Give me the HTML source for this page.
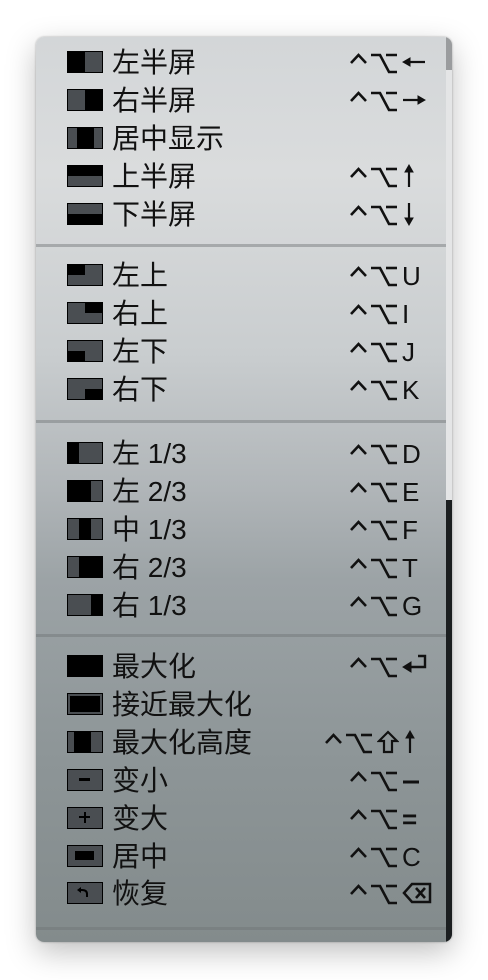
<!DOCTYPE html>
<html><head><meta charset="utf-8"><style>
*{margin:0;padding:0;box-sizing:border-box}
body{width:488px;height:980px;background:#fff;position:relative;overflow:hidden;font-family:"Liberation Sans","Noto Sans CJK SC",sans-serif}
.menu{position:absolute;left:36px;top:37px;width:416px;height:905px;border-radius:8px;overflow:hidden;
background:linear-gradient(180deg,#d3d6d8 0%,#dadcdd 15%,#c9cdcf 35%,#b0b5b8 50%,#9ca3a6 60%,#8d9597 80%,#838b8c 100%);
box-shadow:0 10px 30px rgba(0,0,0,.25),0 0 2px rgba(0,0,0,.3)}
.strip{position:absolute;right:0;top:463px;width:6px;bottom:0;background:#1b1e20}
.thumb{position:absolute;right:0;top:0;width:6px;height:33px;background:#9a9c9e}
.track{position:absolute;right:0;top:33px;width:6px;height:430px;background:#e4e5e6}
.sep{position:absolute;left:0;right:6px;height:3px;background:rgba(110,115,118,.45)}
.row{position:absolute;left:0;right:6px;height:30px}
.ic{position:absolute;left:31px;top:4px;width:36px;height:22px;border:1.5px solid #000;background:#4a4e52}
.ic i{position:absolute;background:#000}
.t{position:absolute;left:76px;top:1px;font-size:28px;color:#111;line-height:30px;white-space:nowrap}
.k{position:absolute;left:314px;top:0;height:30px;display:flex;align-items:center;gap:4px}
.k svg{display:block;stroke:#111;fill:none;stroke-width:2.6}
.k span{font-size:26px;line-height:30px;color:#111;margin-top:2px}
</style></head><body>
<svg width="0" height="0" style="position:absolute">
<defs>
<g id="co"><polyline points="1,16 8.5,8 16,16"/><polyline points="21,8 30,8 39,25 47,25"/><line x1="36" y1="8" x2="47" y2="8"/></g>
</defs></svg>
<div class="menu">
<div class="thumb"></div><div class="track"></div><div class="strip"></div>

<div class="row" style="top:10px"><div class="ic"><i style="left:0;top:0;width:50%;height:100%"></i></div><div class="t">左半屏</div><div class="k"><svg width="48" height="30"><use href="#co"/></svg><svg width="24" height="30"><line x1="6" y1="15" x2="23" y2="15" stroke-width="2.2"/><polygon points="1,15 8,11 8,19" fill="#111" stroke-width="1"/></svg></div></div>
<div class="row" style="top:48px"><div class="ic"><i style="right:0;top:0;width:50%;height:100%"></i></div><div class="t">右半屏</div><div class="k"><svg width="48" height="30"><use href="#co"/></svg><svg width="24" height="30"><line x1="1" y1="15" x2="18" y2="15" stroke-width="2.2"/><polygon points="23,15 16,11 16,19" fill="#111" stroke-width="1"/></svg></div></div>
<div class="row" style="top:86px"><div class="ic"><i style="left:25%;top:0;width:50%;height:100%"></i></div><div class="t">居中显示</div></div>
<div class="row" style="top:124px"><div class="ic"><i style="left:0;top:0;width:100%;height:50%"></i></div><div class="t">上半屏</div><div class="k"><svg width="48" height="30"><use href="#co"/></svg><svg width="14" height="30"><line x1="7" y1="10" x2="7" y2="26" stroke-width="2.2"/><polygon points="7,4 3,11 11,11" fill="#111" stroke-width="1"/></svg></div></div>
<div class="row" style="top:162px"><div class="ic"><i style="left:0;bottom:0;width:100%;height:50%"></i></div><div class="t">下半屏</div><div class="k"><svg width="48" height="30"><use href="#co"/></svg><svg width="14" height="30"><line x1="7" y1="4" x2="7" y2="20" stroke-width="2.2"/><polygon points="7,26 3,19 11,19" fill="#111" stroke-width="1"/></svg></div></div>
<div class="sep" style="top:207px"></div>

<div class="row" style="top:223px"><div class="ic"><i style="left:0;top:0;width:50%;height:50%"></i></div><div class="t">左上</div><div class="k"><svg width="48" height="30"><use href="#co"/></svg><span>U</span></div></div>
<div class="row" style="top:261px"><div class="ic"><i style="right:0;top:0;width:50%;height:50%"></i></div><div class="t">右上</div><div class="k"><svg width="48" height="30"><use href="#co"/></svg><span>I</span></div></div>
<div class="row" style="top:299px"><div class="ic"><i style="left:0;bottom:0;width:50%;height:50%"></i></div><div class="t">左下</div><div class="k"><svg width="48" height="30"><use href="#co"/></svg><span>J</span></div></div>
<div class="row" style="top:337px"><div class="ic"><i style="right:0;bottom:0;width:50%;height:50%"></i></div><div class="t">右下</div><div class="k"><svg width="48" height="30"><use href="#co"/></svg><span>K</span></div></div>
<div class="sep" style="top:383px"></div>

<div class="row" style="top:401px"><div class="ic"><i style="left:0;top:0;width:33%;height:100%"></i></div><div class="t">左 1/3</div><div class="k"><svg width="48" height="30"><use href="#co"/></svg><span>D</span></div></div>
<div class="row" style="top:439px"><div class="ic"><i style="left:0;top:0;width:67%;height:100%"></i></div><div class="t">左 2/3</div><div class="k"><svg width="48" height="30"><use href="#co"/></svg><span>E</span></div></div>
<div class="row" style="top:477px"><div class="ic"><i style="left:33%;top:0;width:34%;height:100%"></i></div><div class="t">中 1/3</div><div class="k"><svg width="48" height="30"><use href="#co"/></svg><span>F</span></div></div>
<div class="row" style="top:515px"><div class="ic"><i style="right:0;top:0;width:67%;height:100%"></i></div><div class="t">右 2/3</div><div class="k"><svg width="48" height="30"><use href="#co"/></svg><span>T</span></div></div>
<div class="row" style="top:553px"><div class="ic"><i style="right:0;top:0;width:33%;height:100%"></i></div><div class="t">右 1/3</div><div class="k"><svg width="48" height="30"><use href="#co"/></svg><span>G</span></div></div>
<div class="sep" style="top:597px"></div>

<div class="row" style="top:614px"><div class="ic" style="background:#000"></div><div class="t">最大化</div><div class="k"><svg width="48" height="30"><use href="#co"/></svg><svg width="26" height="30"><polyline points="16,5 23,5 23,16 8,16" stroke-width="2.4"/><polygon points="1,16 9,11 9,21" fill="#111" stroke-width="1"/></svg></div></div>
<div class="row" style="top:652px"><div class="ic"><i style="left:2px;top:2px;right:2px;bottom:2px"></i></div><div class="t">接近最大化</div></div>
<div class="row" style="top:690px"><div class="ic"><i style="left:17%;top:0;width:50%;height:100%"></i></div><div class="t">最大化高度</div><div class="k" style="left:289px"><svg width="48" height="30"><use href="#co"/></svg><svg width="22" height="30"><polygon points="11,5 20,14 15,14 15,25 7,25 7,14 2,14" stroke-width="2.2"/></svg><svg width="14" height="30"><line x1="7" y1="10" x2="7" y2="26" stroke-width="2.2"/><polygon points="7,4 3,11 11,11" fill="#111" stroke-width="1"/></svg></div></div>
<div class="row" style="top:728px"><div class="ic"><i style="left:11px;top:8px;width:11px;height:3px"></i></div><div class="t">变小</div><div class="k"><svg width="48" height="30"><use href="#co"/></svg><svg width="18" height="30"><line x1="1" y1="17" x2="17" y2="17" stroke-width="3"/></svg></div></div>
<div class="row" style="top:766px"><div class="ic"><i style="left:11px;top:8px;width:11px;height:2px"></i><i style="left:15.5px;top:4px;width:2px;height:11px"></i></div><div class="t">变大</div><div class="k"><svg width="48" height="30"><use href="#co"/></svg><span style="font-weight:bold">=</span></div></div>
<div class="row" style="top:804px"><div class="ic"><i style="left:7px;top:5px;width:19px;height:9px"></i></div><div class="t">居中</div><div class="k"><svg width="48" height="30"><use href="#co"/></svg><span>C</span></div></div>
<div class="row" style="top:841px"><div class="ic"><svg width="33" height="19" style="position:absolute;left:0;top:0"><path d="M19,14 V11 Q19,7 14,7 H12" stroke="#000" stroke-width="2" fill="none"/><polygon points="9,7 13,4 13,10" fill="#000"/></svg></div><div class="t">恢复</div><div class="k"><svg width="48" height="30"><use href="#co"/></svg><svg width="30" height="30"><polygon points="2,15 10,6 28,6 28,24 10,24" stroke-width="2.5"/><line x1="14" y1="10" x2="23" y2="20"/><line x1="23" y1="10" x2="14" y2="20"/></svg></div></div>
<div class="sep" style="top:890px"></div>
</div>
</body></html>
